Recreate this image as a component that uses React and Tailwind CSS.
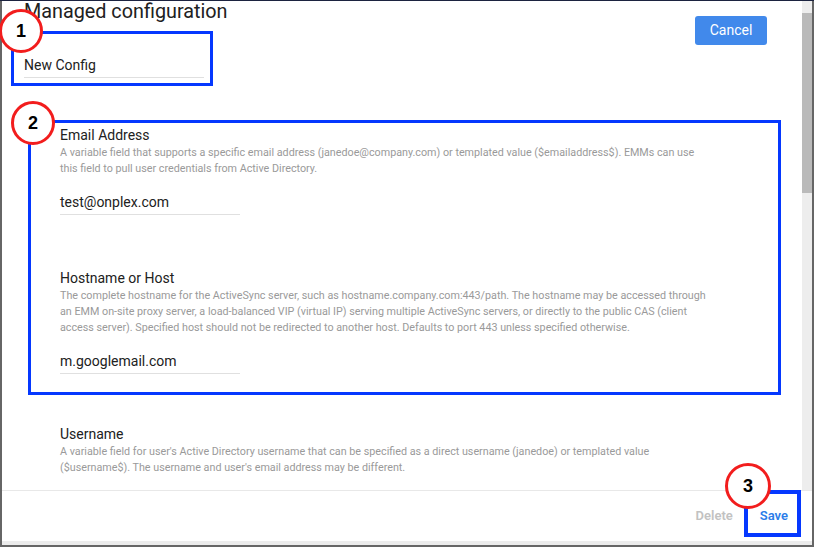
export default function App() {
  const Circle = ({ n, className }) => (
    <div
      className={`absolute rounded-full border-[3px] border-[#f21d1d] bg-white flex items-center justify-center font-['Liberation_Sans',Arial,sans-serif] font-bold text-[18px] text-black ${className}`}
    >
      {n}
    </div>
  );
  return (
    <div className="relative w-[814px] h-[547px] overflow-hidden bg-[#666666] font-['Roboto','Noto_Sans',sans-serif]">
      <div className="h-px bg-[#1c2340]" />
      <div className="flex">
        <div className="w-[2px]" />
        <div className="w-[810px] h-[544px] bg-white flex flex-col">
          <div className="flex h-[489px]">
            <div className="w-[800px] overflow-hidden">
              <div className="pl-[22px] pr-[35px] flex justify-between items-start">
                <div>
                  <h1 className="-mt-px text-[19.8px] leading-[24px] text-[#212121]">Managed configuration</h1>
                  <div className="mt-[31px] w-[180px] h-[23px] leading-[20px] text-[14px] text-[#212121] border-b border-[#e0e0e0]">
                    New Config
                  </div>
                </div>
                <button className="mt-[15px] w-[72px] h-[29px] rounded-[3px] bg-[#4189eb] text-white text-[14px]">
                  Cancel
                </button>
              </div>
              <section className="mt-[47px] pl-[58px]">
                <div>
                  <div className="text-[14px] leading-[20px] text-[#212121]">Email Address</div>
                  <p className="text-[10.75px] leading-[16px] text-[#9a9a9a] max-w-[650px]">
                    A variable field that supports a specific email address (janedoe@company.com) or templated value ($emailaddress$). EMMs can use this field to pull user credentials from Active Directory.
                  </p>
                  <div className="mt-[15px] w-[180px] h-[23px] leading-[20px] text-[14px] text-[#212121] border-b border-[#e0e0e0]">
                    test@onplex.com
                  </div>
                </div>
                <div className="mt-[53px]">
                  <div className="text-[14px] leading-[20px] text-[#212121]">Hostname or Host</div>
                  <p className="text-[10.75px] leading-[16px] text-[#9a9a9a] max-w-[650px]">
                    The complete hostname for the ActiveSync server, such as hostname.company.com:443/path. The hostname may be accessed through an EMM on-site proxy server, a load-balanced VIP (virtual IP) serving multiple ActiveSync servers, or directly to the public CAS (client access server). Specified host should not be redirected to another host. Defaults to port 443 unless specified otherwise.
                  </p>
                  <div className="mt-[15px] w-[180px] h-[23px] leading-[20px] text-[14px] text-[#212121] border-b border-[#e0e0e0]">
                    m.googlemail.com
                  </div>
                </div>
                <div className="mt-[50px]">
                  <div className="text-[14px] leading-[20px] text-[#212121]">Username</div>
                  <p className="text-[10.75px] leading-[16px] text-[#9a9a9a] max-w-[650px]">
                    A variable field for user's Active Directory username that can be specified as a direct username (janedoe) or templated value ($username$). The username and user's email address may be different.
                  </p>
                </div>
              </section>
            </div>
            <div className="w-[10px] bg-[#ededed]">
              <div className="mt-[12px] h-[180px] bg-[#bababa]" />
            </div>
          </div>
          <div className="h-px bg-[#e8e8e8]" />
          <div className="h-[50px] flex items-center justify-end pr-[24px] gap-[27px] text-[13px] font-semibold">
            <span className="text-[#c2c2c2]">Delete</span>
            <span className="text-[#2b7de9]">Save</span>
          </div>
          <div className="h-[4px] bg-[#ececec]" />
        </div>
      </div>

      <div className="absolute left-[11px] top-[31px] w-[202px] h-[55px] border-[3px] border-[#0538ff]" />
      <div className="absolute left-[28px] top-[120px] w-[753px] h-[275px] border-[3px] border-[#0538ff]" />
      <div className="absolute left-[744px] top-[490px] w-[57px] h-[47px] border-[4px] border-[#0538ff]" />

      <Circle n="1" className="left-[-1px] top-[9px] w-[44px] h-[44px]" />
      <Circle n="2" className="left-[11px] top-[101px] w-[44px] h-[44px]" />
      <Circle n="3" className="left-[725px] top-[463px] w-[46px] h-[46px]" />
    </div>
  );
}
